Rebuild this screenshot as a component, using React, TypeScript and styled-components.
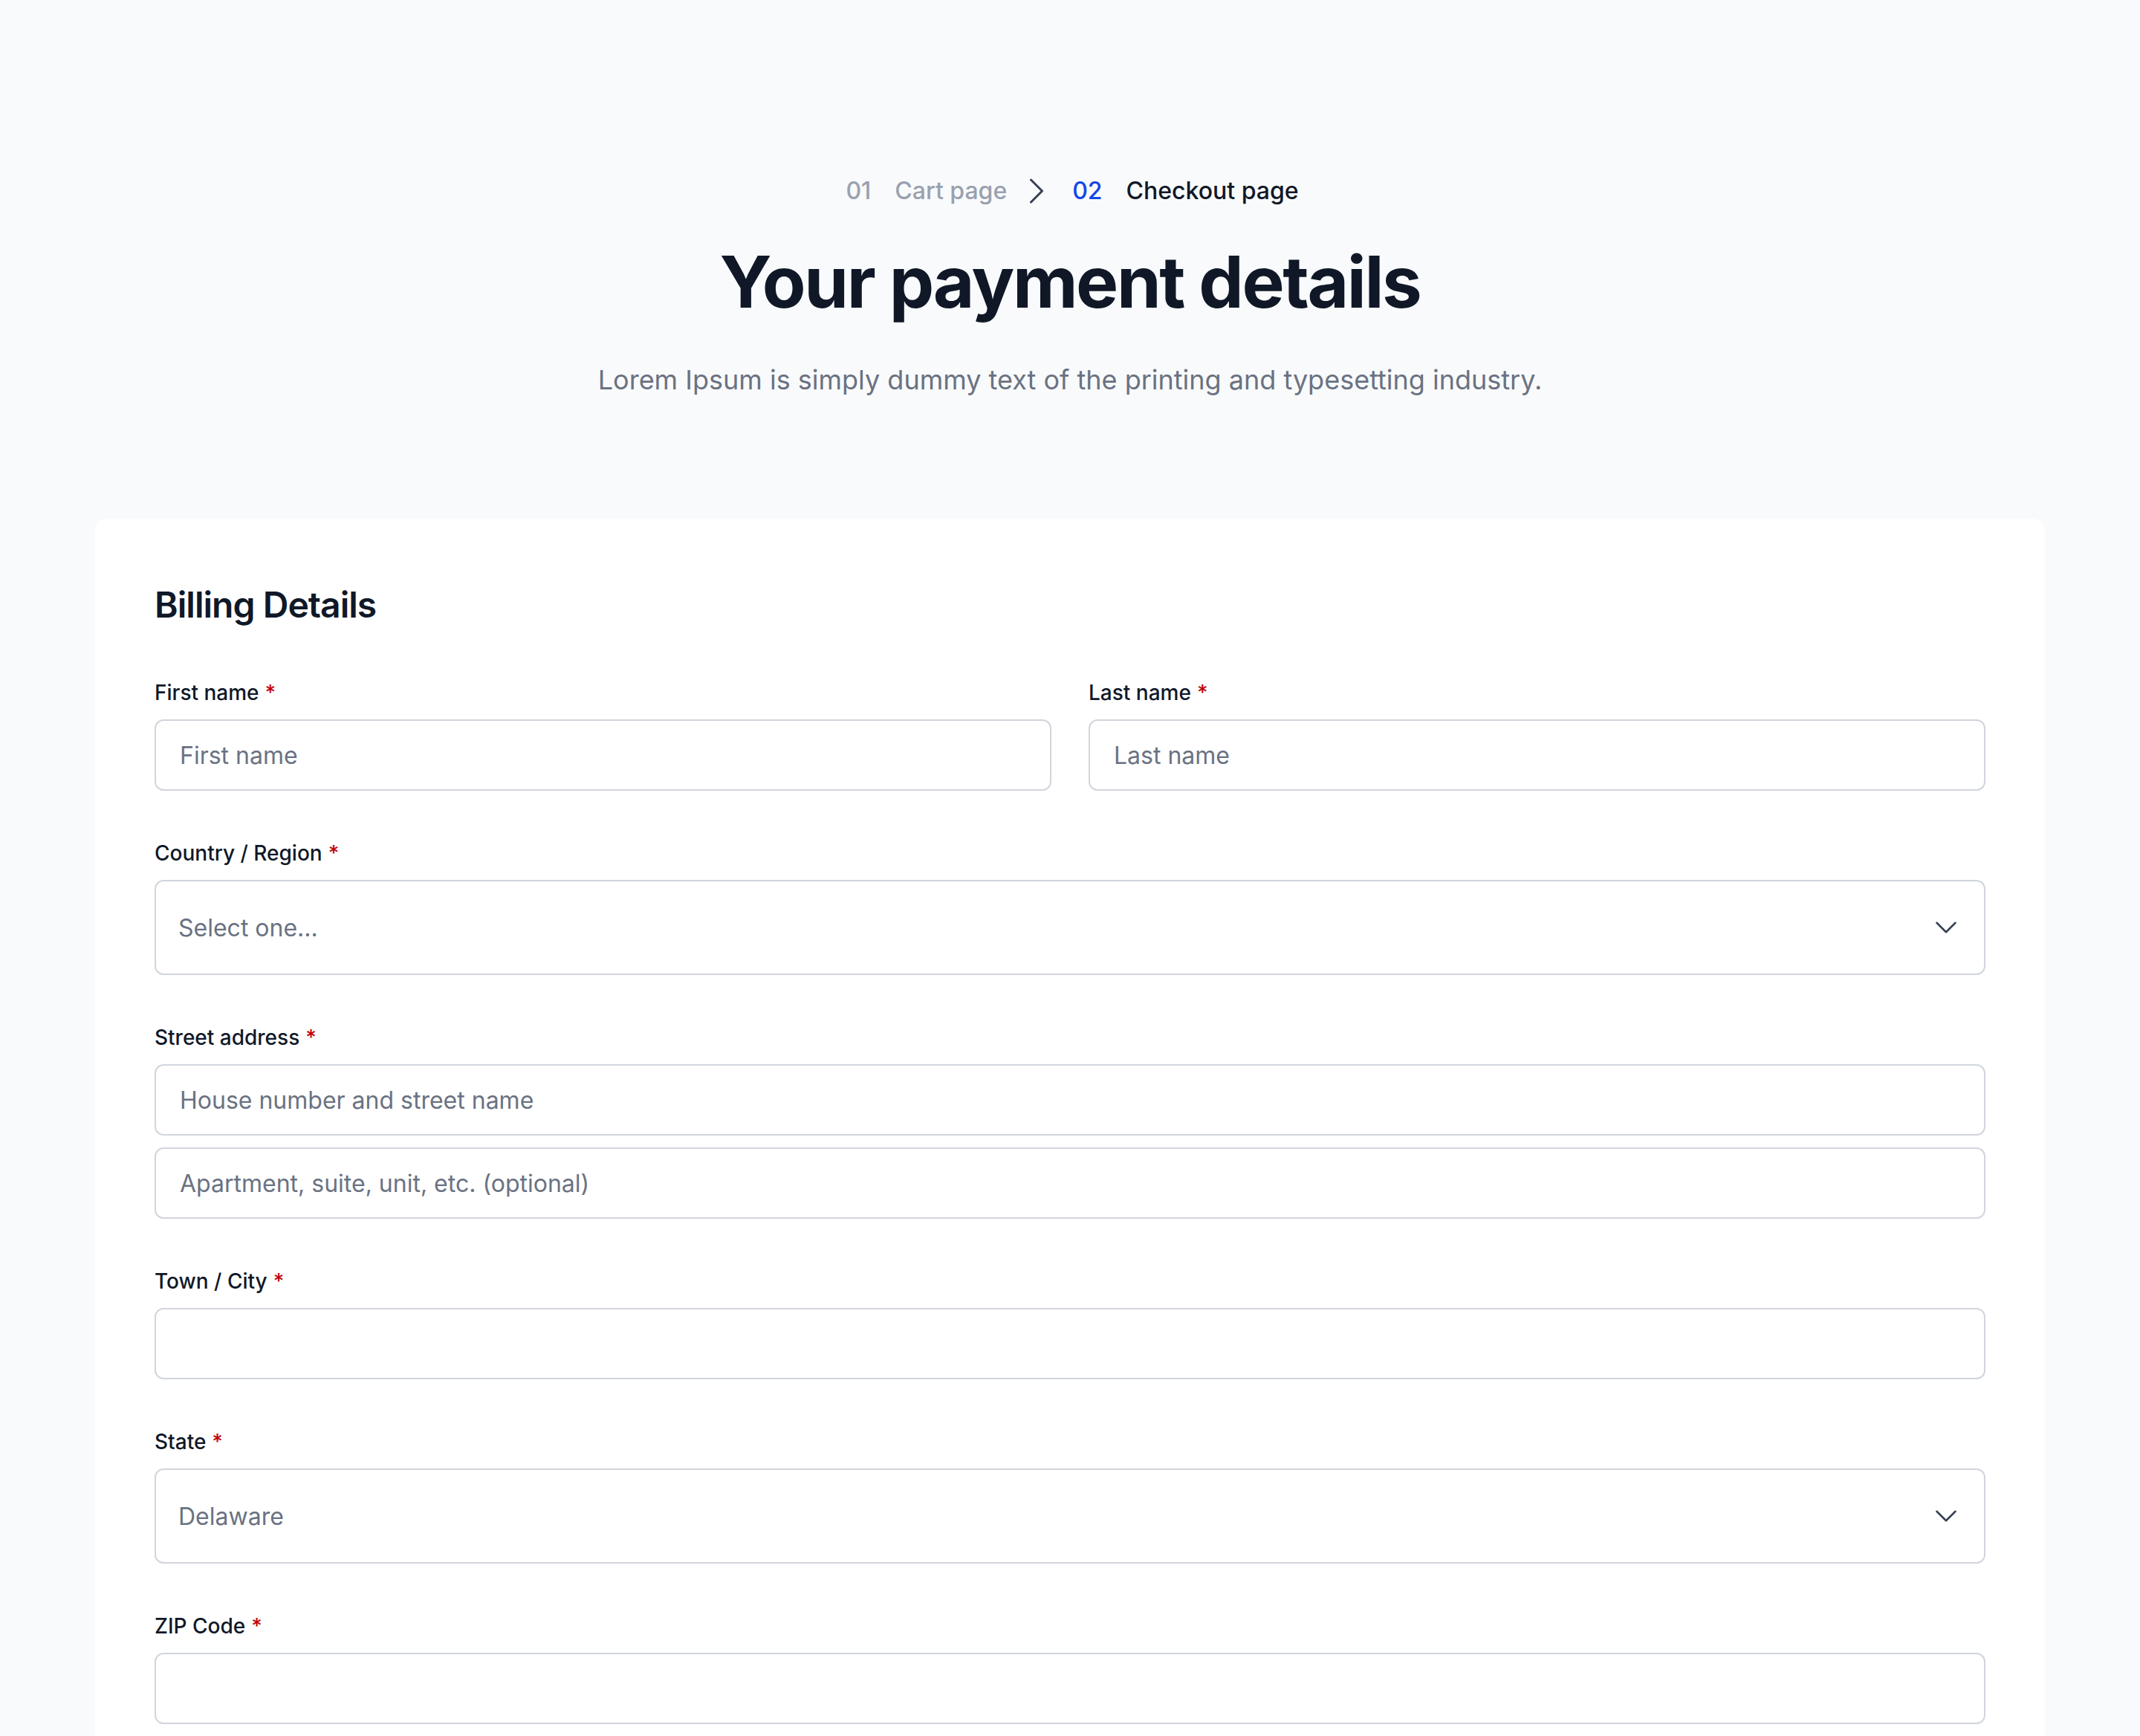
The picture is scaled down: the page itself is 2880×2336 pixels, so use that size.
import styled, { createGlobalStyle } from "styled-components";

interface IField {
  label: string;
  placeholder?: string;
  kind?: "input" | "select";
  value?: string;
}

interface IFieldProps {
  field: IField;
}

const GlobalStyle = createGlobalStyle`
  * {
    box-sizing: border-box;
  }
  body {
    margin: 0;
    background-color: #f9fafb;
    font-family: Inter, "Noto Sans", "Liberation Sans", sans-serif;
    color: #101828;
  }
`;

const Page = styled.main`
  padding: 233px 128px 0;
`;

const Header = styled.header`
  display: flex;
  flex-direction: column;
  align-items: center;
  text-align: center;
`;

const Steps = styled.ol`
  display: flex;
  align-items: center;
  margin: 0 0 0 6px;
  padding: 0;
  list-style: none;
  font-size: 32px;
  line-height: 48px;
  font-weight: 500;
`;

const Step = styled.li<{ $active?: boolean }>`
  display: flex;
  align-items: center;
  gap: 32px;
  color: ${(props) => (props.$active ? "#101828" : "#99a1af")};
`;

const StepNumber = styled.span<{ $active?: boolean }>`
  color: ${(props) => (props.$active ? "#1447e6" : "#99a1af")};
`;

const Separator = styled.li`
  display: flex;
  margin: 0 24px 0 16px;
  color: #364153;
`;

const Title = styled.h1`
  margin: 50px 0 0;
  font-size: 96px;
  line-height: 96px;
  font-weight: 700;
  letter-spacing: -0.025em;
  color: #101828;
`;

const Subtitle = styled.p`
  margin: 56px 0 0;
  font-size: 36px;
  line-height: 56px;
  color: #6a7282;
`;

const Card = styled.section`
  margin-top: 159px;
  background-color: #ffffff;
  border-radius: 16px;
  padding: 80px 80px 160px;
`;

const CardTitle = styled.h2`
  margin: 0 0 62px;
  font-size: 48px;
  line-height: 72px;
  font-weight: 600;
  letter-spacing: -0.02em;
  color: #101828;
`;

const Form = styled.form`
  display: flex;
  flex-direction: column;
  gap: 64px;
`;

const Row = styled.div`
  display: grid;
  grid-template-columns: 1fr 1fr;
  gap: 50px;
`;

const FieldWrap = styled.div`
  display: flex;
  flex-direction: column;
  gap: 16px;
`;

const Label = styled.label`
  font-size: 28px;
  line-height: 40px;
  font-weight: 500;
  color: #101828;
`;

const Required = styled.span`
  margin-left: 8px;
  color: #c10007;
`;

const Input = styled.input`
  width: 100%;
  height: 96px;
  padding: 0 32px;
  border: 2px solid #d1d5dc;
  border-radius: 12px;
  background-color: #ffffff;
  font-family: inherit;
  font-size: 32px;
  color: #101828;
  outline: none;

  &::placeholder {
    color: #6a7282;
  }
`;

const SelectWrap = styled.div`
  position: relative;
`;

const Select = styled.select`
  width: 100%;
  height: 128px;
  padding: 0 30px;
  border: 2px solid #d1d5dc;
  border-radius: 12px;
  background-color: #ffffff;
  font-family: inherit;
  font-size: 32px;
  color: #6a7282;
  appearance: none;
  outline: none;
`;

const SelectIcon = styled.svg`
  position: absolute;
  top: 50%;
  right: 33px;
  width: 40px;
  height: 40px;
  transform: translateY(-50%);
  color: #364153;
  pointer-events: none;
`;

const Stack = styled.div`
  display: flex;
  flex-direction: column;
  gap: 16px;
`;

const ChevronRight = () => (
  <svg width="48" height="48" viewBox="0 0 24 24" fill="none" stroke="currentColor" strokeWidth="1.5">
    <path strokeLinecap="round" strokeLinejoin="round" d="m8.25 4.5 7.5 7.5-7.5 7.5" />
  </svg>
);

const Field = ({ field }: IFieldProps) => {
  return (
    <FieldWrap>
      <Label>
        {field.label}
        <Required>*</Required>
      </Label>
      {field.kind === "select" ? (
        <SelectWrap>
          <Select defaultValue={field.value}>
            <option value={field.value}>{field.value}</option>
          </Select>
          <SelectIcon viewBox="0 0 24 24" fill="none" stroke="currentColor" strokeWidth="1.5">
            <path strokeLinecap="round" strokeLinejoin="round" d="m19.5 8.25-7.5 7.5-7.5-7.5" />
          </SelectIcon>
        </SelectWrap>
      ) : (
        <Input type="text" placeholder={field.placeholder} />
      )}
    </FieldWrap>
  );
};

const App = () => {
  return (
    <>
      <GlobalStyle />
      <Page>
        <Header>
          <Steps>
            <Step>
              <StepNumber>01</StepNumber>
              <span>Cart page</span>
            </Step>
            <Separator>
              <ChevronRight />
            </Separator>
            <Step $active>
              <StepNumber $active>02</StepNumber>
              <span>Checkout page</span>
            </Step>
          </Steps>
          <Title>Your payment details</Title>
          <Subtitle>Lorem Ipsum is simply dummy text of the printing and typesetting industry.</Subtitle>
        </Header>

        <Card>
          <CardTitle>Billing Details</CardTitle>
          <Form>
            <Row>
              <Field field={{ label: "First name", placeholder: "First name" }} />
              <Field field={{ label: "Last name", placeholder: "Last name" }} />
            </Row>
            <Field field={{ label: "Country / Region", kind: "select", value: "Select one..." }} />
            <FieldWrap>
              <Label>
                Street address
                <Required>*</Required>
              </Label>
              <Stack>
                <Input type="text" placeholder="House number and street name" />
                <Input type="text" placeholder="Apartment, suite, unit, etc. (optional)" />
              </Stack>
            </FieldWrap>
            <Field field={{ label: "Town / City" }} />
            <Field field={{ label: "State", kind: "select", value: "Delaware" }} />
            <Field field={{ label: "ZIP Code" }} />
          </Form>
        </Card>
      </Page>
    </>
  );
};

export default App;
